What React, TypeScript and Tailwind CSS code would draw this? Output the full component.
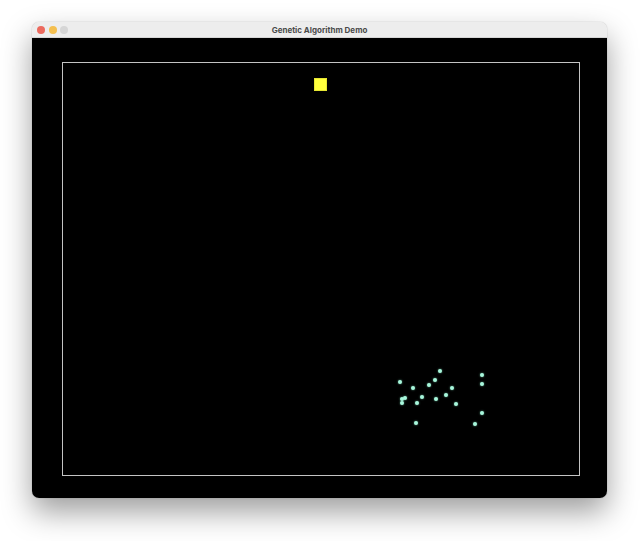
import React from 'react';

const dots: [number, number][] = [
  [439.7, 371], [481.7, 374.7], [400, 381.7], [435, 380], [429.3, 385],
  [413.3, 388], [452.3, 388], [482.3, 384], [404.7, 398.3], [402, 399.3],
  [422, 397.3], [435.7, 399], [446, 394.7], [402.3, 402.7], [417.3, 403],
  [456.3, 404], [481.7, 412.7], [475, 423.7], [416, 423],
];

const TrafficLights: React.FC = () => (
  <div className="flex items-center gap-[3.5px] pl-[5px]">
    <span className="w-[8px] h-[8px] rounded-full bg-[#ec6a5e]" />
    <span className="w-[8px] h-[8px] rounded-full bg-[#f4bf4f]" />
    <span className="w-[8px] h-[8px] rounded-full bg-[#d6d6d6]" />
  </div>
);

export default function App() {
  return (
    <div className="w-[640px] h-[541px] bg-white pl-[32px] pt-[22px]">
      <div className="w-[575px] h-[476px] flex flex-col rounded-[7px] overflow-hidden shadow-[0_14px_30px_rgba(0,0,0,0.38),0_0_1px_rgba(0,0,0,0.4)]">
        <div className="relative h-[16px] flex items-center bg-[#ededed] border-b border-[#d6d6d6]">
          <TrafficLights />
          <div className="absolute inset-0 flex items-center justify-center text-[8px] font-bold text-[#4a4a4a] font-['Inter','Liberation_Sans',sans-serif]">
            Genetic Algorithm Demo
          </div>
        </div>
        <div className="relative flex-1 bg-black pl-[30px] pt-[24px]">
          <div className="w-[518px] h-[414px] border border-[#c4c4c4]" />
          <div className="absolute left-[282px] top-[40px] w-[13px] h-[13px] bg-[#ffff3c] border border-[#e6e632]" />
          {dots.map(([x, y], i) => (
            <span
              key={i}
              className="absolute w-[4px] h-[4px] rounded-full bg-[#a8f7dc] shadow-[0_0_2px_rgba(140,240,205,0.7)]"
              style={{ left: x - 32 - 2, top: y - 38 - 2 }}
            />
          ))}
        </div>
      </div>
    </div>
  );
}
